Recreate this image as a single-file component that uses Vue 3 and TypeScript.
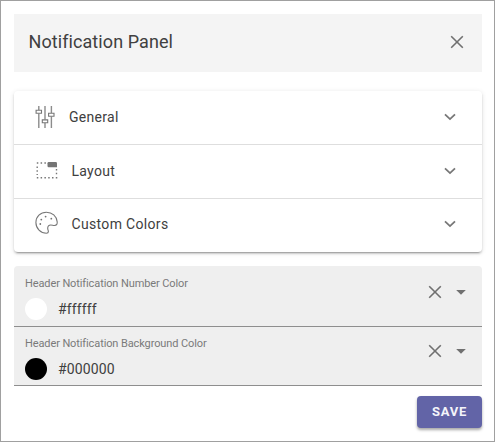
<script setup lang="ts">
import { ref } from 'vue'

interface Section {
  id: string
  title: string
}
interface ColorField {
  id: string
  label: string
  value: string
}

const sections: Section[] = [
  { id: 'general', title: 'General' },
  { id: 'layout', title: 'Layout' },
  { id: 'colors', title: 'Custom Colors' },
]

const fields = ref<ColorField[]>([
  { id: 'number', label: 'Header Notification Number Color', value: '#ffffff' },
  { id: 'background', label: 'Header Notification Background Color', value: '#000000' },
])

function clearField(field: ColorField): void {
  field.value = ''
}
</script>

<template>
  <main class="window">
    <header class="titlebar">
      <h1 class="title">Notification Panel</h1>
      <button class="icon-button" type="button">
        <svg class="cross" width="14" height="14" viewBox="0 0 14 14"><path d="M1.2 1.2 12.8 12.8M12.8 1.2 1.2 12.8" /></svg>
      </button>
    </header>

    <section class="accordion">
      <div v-for="s in sections" :key="s.id" class="section" :class="s.id">
        <svg v-if="s.id === 'general'" class="icon" width="20" height="22" viewBox="0 0 20 22">
          <path class="rails" d="M3.8 0V4M3.8 7.5V22M10 0V13.5M10 17V22M16.4 0V7M16.4 10.5V22" />
          <path d="M1.1 4.3H6.5V7.2H1.1ZM7.3 13.9H12.7V16.8H7.3ZM13.6 7.3H19V10.2H13.6Z" />
        </svg>
        <svg v-else-if="s.id === 'layout'" class="icon" width="22" height="17" viewBox="0 0 22 17">
          <path class="dots" d="M.8 1H11M1.2 4.4V13M20.5 7V13M.8 15.7H21.4" />
          <path class="solid" d="M11.5 1.2Q11.5 0 12.7 0H19.8Q21 0 21 1.2V5.2H12.7Q11.5 5.2 11.5 4Z" />
        </svg>
        <svg v-else class="icon" width="24" height="24" viewBox="0 0 24 24">
          <path d="M11.4 1.2C5.4 1.2 .9 5.8 .9 11.5C.9 17.4 5.7 22.2 11.4 22.2C12.8 22.2 13.4 21.6 13.4 20.5C13.4 19.4 12.7 18.7 12.7 17.3C12.7 15.2 13.8 14 15.8 14C17.2 14 18 14.5 19.5 14.5C21.8 14.5 22.4 12.8 22.2 10.9C21.8 5.3 17.1 1.2 11.4 1.2Z" />
          <g class="solid">
            <circle cx="5.3" cy="13" r=".9" /><circle cx="6.3" cy="8.6" r=".9" />
            <circle cx="10.6" cy="5.6" r=".9" /><circle cx="16.3" cy="7.7" r=".9" />
          </g>
        </svg>
        <span class="name">{{ s.title }}</span>
        <svg class="chevron" width="12" height="8" viewBox="0 0 12 8"><path d="M1 1.3 6 6.1 11 1.3" /></svg>
      </div>
    </section>

    <section class="fields">
      <div v-for="f in fields" :key="f.id" class="field">
        <div class="content">
          <label class="label">{{ f.label }}</label>
          <div class="value">
            <span class="swatch" :style="{ background: f.value }"></span>
            <span>{{ f.value }}</span>
          </div>
        </div>
        <button class="icon-button" type="button" @click="clearField(f)">
          <svg class="cross" width="14" height="14" viewBox="0 0 14 14"><path d="M1.2 1.2 12.8 12.8M12.8 1.2 1.2 12.8" /></svg>
        </button>
        <svg class="caret" width="10" height="5" viewBox="0 0 10 5"><path d="M.2 0H9.8L5 4.8Z" /></svg>
      </div>
    </section>

    <footer class="actions">
      <button class="save" type="button">SAVE</button>
    </footer>
  </main>
</template>

<style>
body {
  background: #fff;
}
</style>

<style scoped>
.window {
  box-sizing: border-box;
  width: 495px;
  height: 442px;
  padding: 13px 12px 12px 13px;
  border: 1px solid #a0a0a0;
  background: #fff;
  color: #404040;
  font-family: Roboto, "Liberation Sans", sans-serif;
  overflow: hidden;
}
.titlebar {
  display: flex;
  align-items: center;
  justify-content: space-between;
  height: 58px;
  box-sizing: border-box;
  padding: 0 18px 2px 14.5px;
  background: #f4f4f4;
}
.title {
  margin: 0;
  font-size: 18px;
  font-weight: 400;
  line-height: 24px;
  letter-spacing: 0.08px;
}
.icon-button {
  display: flex;
  padding: 0;
  border: 0;
  background: none;
}
.cross {
  fill: none;
  stroke: #707070;
  stroke-width: 1.6;
}
.accordion {
  margin-top: 19px;
  border-radius: 4px;
  box-shadow: 0 3px 1px -2px rgba(0, 0, 0, 0.2), 0 2px 2px rgba(0, 0, 0, 0.14), 0 1px 5px rgba(0, 0, 0, 0.12);
}
.section {
  display: flex;
  align-items: center;
  box-sizing: border-box;
  height: 54px;
  padding: 0 26.5px 2px 21px;
  border-bottom: 1px solid #dedede;
}
.section.layout {
  padding-left: 22px;
}
.section.colors {
  height: 53px;
  padding-bottom: 4px;
  border-bottom: 0;
}
.icon {
  fill: none;
  stroke: #777;
  stroke-width: 1.1;
}
.colors .icon {
  margin-bottom: 2px;
}
.rails {
  stroke: #8c8c8c;
  stroke-width: 1.4;
}
.dots {
  stroke-width: 1.4;
  stroke-dasharray: 1.5 2.3;
}
.solid {
  fill: #757575;
  stroke: none;
}
.name {
  flex: 1;
  margin-left: 14px;
  font-size: 14px;
  line-height: 20px;
  letter-spacing: 0.28px;
}
.layout .name {
  margin-left: 13.5px;
}
.colors .name {
  margin-left: 12.5px;
  letter-spacing: 0.33px;
}
.chevron {
  fill: none;
  stroke: #777;
  stroke-width: 1.8;
}
.fields {
  margin-top: 14px;
  overflow: hidden;
  border-radius: 4px 4px 0 0;
}
.field {
  display: flex;
  align-items: flex-start;
  box-sizing: border-box;
  height: 59px;
  padding: 0 16px 0 11px;
  border-bottom: 1px solid #8e8e8e;
  background: #efefef;
}
.field:first-child {
  height: 61px;
}
.content {
  flex: 1;
  padding-top: 11px;
}
.field:last-child .content {
  padding-top: 10px;
}
.label {
  display: block;
  color: #7a7a7a;
  font-size: 11px;
  line-height: 14px;
  letter-spacing: -0.11px;
}
.value {
  display: flex;
  align-items: flex-start;
  gap: 11px;
  margin-top: 8px;
  font-size: 14px;
  line-height: 20px;
  letter-spacing: 0.15px;
}
.swatch {
  width: 22px;
  height: 22px;
  border-radius: 50%;
}
.field:first-child .swatch {
  margin-top: -1px;
}
.field:last-child .value {
  margin-top: 7px;
  line-height: 22px;
}
.field .icon-button {
  margin-top: 19px;
}
.field .caret {
  margin: 24px 0 0 14px;
  fill: #707070;
}
.field:last-child .icon-button {
  margin-top: 17px;
}
.field:last-child .caret {
  margin-top: 22px;
}
.actions {
  display: flex;
  justify-content: flex-end;
  margin-top: 10px;
}
.save {
  width: 65px;
  height: 32px;
  padding: 0;
  border: 0;
  border-radius: 4px;
  background: #6264a7;
  color: #f4f4fa;
  font: 700 13px/32px Roboto, "Liberation Sans", sans-serif;
  letter-spacing: 0.8px;
  box-shadow: 0 2px 3px rgba(0, 0, 0, 0.35);
}
</style>
